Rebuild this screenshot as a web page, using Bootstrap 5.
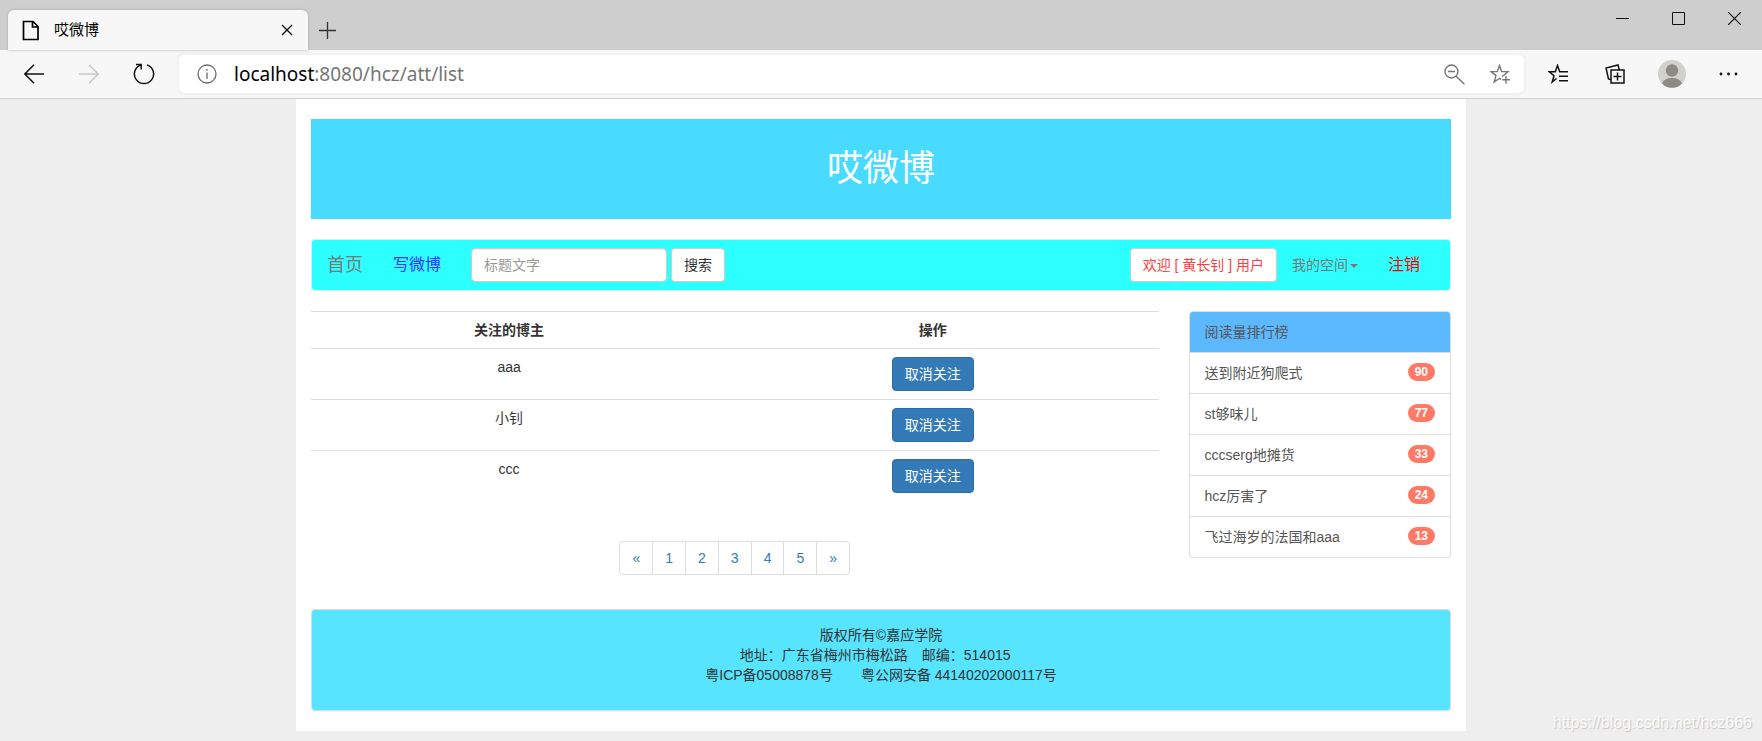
<!DOCTYPE html>
<html lang="zh-CN">
<head>
<meta charset="utf-8">
<meta name="viewport" content="width=device-width, initial-scale=1">
<title>哎微博</title>
<link href="https://cdn.jsdelivr.net/npm/bootstrap@5.3.0/dist/css/bootstrap.min.css" rel="stylesheet">
<style>
  body {
    --bs-body-font-family: "Liberation Sans", "Noto Sans CJK SC", sans-serif;
    font-family: var(--bs-body-font-family);
    font-size: 14px;
    line-height: 20px;
    color: #333;
    background: #eee;
    min-height: 100vh;
  }
  svg { display: block; fill: none; stroke: currentColor; }

  /* browser frame */
  .tab-strip { height: 50px; background: #cecece; padding-left: 8px; }
  .browser-tab { width: 300px; height: 40px; padding: 0 10px 0 14px; gap: 14px; background: #f7f7f7; border-radius: 6px 6px 0 0; box-shadow: 0 0 3px #aaa; color: #000; font-size: 15px; }
  .frame-btn { display: flex; align-items: center; justify-content: center; padding: 0; border: 0; background: none; color: #111; }
  .tab-btn { width: 22px; height: 22px; }
  .new-tab { width: 38px; height: 40px; color: #333; }
  .win-btn { width: 56px; height: 36px; }
  .toolbar { background: #f7f7f7; border-bottom: 1px solid #cfcfcf; height: 49px; padding: 0 5px 0 6px; }
  .tool-btn { width: 55px; height: 38px; }
  .tool-btn:disabled { color: #c8c8c8; }
  .side-btn { width: 57px; height: 38px; }
  .in-btn { width: 45px; height: 38px; color: #767676; }
  .address { height: 38px; margin: 0 5px 0 8px; padding-right: 2px; background: #fff; border-radius: 5px; box-shadow: 0 0 4px #e4e4e4; }
  .info-btn { width: 55px; height: 38px; color: #6c6c6c; }
  .url-box { font-family: "Noto Sans", sans-serif; font-size: 19px; line-height: 24px; color: #767676; outline: 0; }
  .url-box span { color: #000; }
  .solid-icon { stroke: none; }

  /* page */
  .page { max-width: 1170px; padding: 20px 15px; background: #fff; }
  .banner { height: 100px; background: #48daff; color: #fff; font-size: 36px; line-height: 40px; font-weight: 400; }
  .main-nav { min-height: 52px; padding: 0 15px; margin: 20px 0; background: #2dffff; border: 1px solid #e7e7e7; border-radius: 4px; }
  .main-nav a { text-decoration: none; color: #777; }
  .main-nav .brand-link { font-size: 18px; margin-right: 30px; }
  .main-nav .write-link { font-size: 16px; color: #33f; margin-right: 30px; }
  .main-nav .exit-link { font-size: 16px; color: #f00; margin: 0 15px 0 30px; }
  .ctl { height: 34px; padding: 6px 12px; font-size: 14px; line-height: 20px; border: 1px solid #ccc; border-radius: 4px; }
  .search-box { width: 196px; box-shadow: inset 0 1px 1px rgba(0,0,0,.08); }
  .search-box::placeholder { color: #999; }
  .btn-plain, .btn-plain:hover { background: #fff; color: #333; }
  .btn-user, .btn-user:hover { background: #fff; color: #ff3c3c; margin-right: 15px; }
  .space-link::after { content: ""; display: inline-block; margin-left: 2px; vertical-align: middle; border-top: 4px solid; border-left: 4px solid transparent; border-right: 4px solid transparent; }
  .page .row { --bs-gutter-x: 30px; }
  .follow-table { margin-bottom: 20px; text-align: center; color: #333; }
  .follow-table th, .follow-table td { padding: 8px; border: 0; border-top: 1px solid #ddd; color: #333; }
  .btn-follow { --bs-btn-bg: #337ab7; --bs-btn-color: #fff; --bs-btn-hover-bg: #286090; --bs-btn-hover-color: #fff; border-color: #2e6da4; vertical-align: top; }
  .pages { margin: 40px 0 34px; }
  .pages .pagination { --bs-pagination-border-radius: 4px; }
  .pages .page-link { padding: 6px 12px; font-size: 14px; line-height: 20px; color: #337ab7; border-color: #ddd; }
  .rank { --bs-list-group-border-color: #ddd; --bs-list-group-color: #555; --bs-list-group-action-color: #555; --bs-list-group-item-padding-x: 15px; --bs-list-group-item-padding-y: 10px; --bs-list-group-border-radius: 4px; }
  .rank .rank-head { background: #5cb9ff; color: #555; }
  .rank .badge { height: 18px; padding: 3px 7px; font-size: 12px; line-height: 12px; background: #ff7a66; border-radius: 10px; }
  .site-foot { padding: 15px 15px 25px; background: #56e4ff; border: 1px solid #ddd; border-radius: 4px; box-shadow: 0 1px 1px rgba(0,0,0,.05); }
  .watermark { position: absolute; right: 10px; bottom: 8px; font-size: 16px; color: #fafafa; text-shadow: 1px 1px 1px #c4c4c4; }
</style>
</head>
<body class="position-relative">

<header>
  <div class="tab-strip d-flex justify-content-between align-items-start">
    <div class="d-flex align-self-end align-items-center">
      <div class="browser-tab d-flex align-items-center">
        <svg width="18" height="21" viewBox="0 0 18 21" stroke-width="1.700"><path d="M1.500 1.500H11L16 6.500v13H1.500zM10.500 1.500V7H16"/></svg>
        <span class="flex-grow-1">哎微博</span>
        <button class="frame-btn tab-btn" type="button" aria-label="关闭标签页"><svg width="12" height="12" viewBox="0 0 12 12" stroke-width="1.400"><path d="M1 1l10 10M11 1L1 11"/></svg></button>
      </div>
      <button class="frame-btn new-tab" type="button" aria-label="新建标签页"><svg width="17" height="17" viewBox="0 0 17 17" stroke-width="1.300"><path d="M8.500 0v17M0 8.500h17"/></svg></button>
    </div>
    <div class="d-flex">
      <button class="frame-btn win-btn" type="button" aria-label="最小化"><svg width="13" height="13" viewBox="0 0 13 13"><path d="M0 6.500h13"/></svg></button>
      <button class="frame-btn win-btn" type="button" aria-label="最大化"><svg width="13" height="13" viewBox="0 0 13 13"><path d="M.5.5h12v12H.5z"/></svg></button>
      <button class="frame-btn win-btn" type="button" aria-label="关闭"><svg width="13" height="13" viewBox="0 0 13 13" stroke-width="1.200"><path d="M0 0l13 13M13 0L0 13"/></svg></button>
    </div>
  </div>
  <div class="toolbar d-flex align-items-center">
    <button class="frame-btn tool-btn" type="button" aria-label="后退"><svg width="20" height="20" viewBox="0 0 20 20" stroke-width="1.500"><path d="M20 10H1M10 .8L.9 10l9.100 9.200"/></svg></button>
    <button class="frame-btn tool-btn" type="button" aria-label="前进" disabled><svg width="20" height="20" viewBox="0 0 20 20" stroke-width="1.500"><path d="M0 10h19M10 .8l9.100 9.200-9.100 9.200"/></svg></button>
    <button class="frame-btn tool-btn" type="button" aria-label="刷新"><svg width="22" height="22" viewBox="0 0 22 22" stroke-width="1.500"><path d="M14 1.900A9.600 9.600 0 1 1 8 1.900M3 1.500H8.200v5"/></svg></button>
    <div class="address d-flex align-items-center flex-grow-1">
      <button class="frame-btn info-btn" type="button" aria-label="站点信息"><svg width="20" height="20" viewBox="0 0 20 20" stroke-width="1.300"><circle cx="10" cy="10" r="9"/><path d="M10 8.500V15M10 5v1.700"/></svg></button>
      <div class="url-box flex-grow-1" role="textbox" contenteditable="true" spellcheck="false" aria-label="地址"><span>localhost</span>:8080/hcz/att/list</div>
      <button class="frame-btn in-btn" type="button" aria-label="缩小"><svg width="21" height="21" viewBox="0 0 21 21" stroke-width="1.400"><circle cx="7.500" cy="7.500" r="6.500"/><path d="M4 7.500h7M12.200 12.200l8.200 8"/></svg></button>
      <button class="frame-btn in-btn" type="button" aria-label="添加到收藏夹"><svg width="20" height="20" viewBox="0 0 20 20" stroke-width="1.400"><path d="M12 12.500l1.800-1.300 4.200-3.600h-6.400L9.500 1.500 7.300 7.600H1l5 4-1.800 6.400 5.300-3.700 1.600 1M16 12v7.500M12.300 15.700h7.500"/></svg></button>
    </div>
    <button class="frame-btn side-btn" type="button" aria-label="收藏夹"><svg width="20" height="20" viewBox="0 0 20 20" stroke-width="1.500"><path d="M8.500 14.500L4.200 18 6 11.700 1 7.700h6.300L9.500 1.500l2.200 6.200H20M11 12.200h9M11 16.700h9"/></svg></button>
    <button class="frame-btn side-btn" type="button" aria-label="集锦"><svg width="20" height="20" viewBox="0 0 20 20" stroke-width="1.500"><path d="M6 6h13v13H6zM12.500 8.500v8M8.500 12.500h8M5.500 15.500L3.500 15 1 4l12-3 1.200 4.500"/></svg></button>
    <button class="frame-btn side-btn" type="button" aria-label="用户"><svg class="solid-icon" width="28" height="28" viewBox="0 0 28 28"><circle cx="14" cy="14" r="14" fill="#d3d1ce"/><circle cx="14" cy="10.500" r="6.200" fill="#8d8985"/><path d="M4 23.500c2.500-7.300 17.500-7.300 20 0A14 14 0 0 1 4 23.500z" fill="#8d8985"/></svg></button>
    <button class="frame-btn side-btn" type="button" aria-label="更多"><svg class="solid-icon" width="19" height="4" viewBox="0 0 19 4"><circle cx="2" cy="2" r="1.400" fill="#111"/><circle cx="9.500" cy="2" r="1.400" fill="#111"/><circle cx="17" cy="2" r="1.400" fill="#111"/></svg></button>
  </div>
</header>

<main class="container page">
  <h1 class="banner d-flex align-items-center justify-content-center mb-0">哎微博</h1>

  <nav class="main-nav d-flex align-items-center">
    <a class="brand-link" href="#">首页</a>
    <a class="write-link" href="#">写微博</a>
    <form class="d-flex gap-1 me-auto" role="search">
      <input class="form-control ctl search-box" type="text" placeholder="标题文字" aria-label="标题文字">
      <button class="btn ctl btn-plain" type="button">搜索</button>
    </form>
    <button class="btn ctl btn-user" type="button">欢迎 [ 黄长钊 ] 用户</button>
    <a class="space-link" href="#">我的空间</a>
    <a class="exit-link" href="#">注销</a>
  </nav>

  <div class="row">
    <div class="col-9">
      <table class="table follow-table">
        <thead><tr><th>关注的博主</th><th>操作</th></tr></thead>
        <tbody>
          <tr><td>aaa</td><td><button class="btn ctl btn-follow" type="button">取消关注</button></td></tr>
          <tr><td>小钊</td><td><button class="btn ctl btn-follow" type="button">取消关注</button></td></tr>
          <tr><td>ccc</td><td><button class="btn ctl btn-follow" type="button">取消关注</button></td></tr>
        </tbody>
      </table>
      <nav class="pages" aria-label="分页">
        <ul class="pagination justify-content-center mb-0">
          <li class="page-item"><a class="page-link" href="#">«</a></li>
          <li class="page-item"><a class="page-link" href="#">1</a></li>
          <li class="page-item"><a class="page-link" href="#">2</a></li>
          <li class="page-item"><a class="page-link" href="#">3</a></li>
          <li class="page-item"><a class="page-link" href="#">4</a></li>
          <li class="page-item"><a class="page-link" href="#">5</a></li>
          <li class="page-item"><a class="page-link" href="#">»</a></li>
        </ul>
      </nav>
    </div>
    <aside class="col-3">
      <div class="list-group rank">
        <a class="list-group-item list-group-item-action rank-head" href="#">阅读量排行榜</a>
        <a class="list-group-item list-group-item-action d-flex justify-content-between" href="#">送到附近狗爬式<span class="badge">90</span></a>
        <a class="list-group-item list-group-item-action d-flex justify-content-between" href="#">st够味儿<span class="badge">77</span></a>
        <a class="list-group-item list-group-item-action d-flex justify-content-between" href="#">cccserg地摊货<span class="badge">33</span></a>
        <a class="list-group-item list-group-item-action d-flex justify-content-between" href="#">hcz厉害了<span class="badge">24</span></a>
        <a class="list-group-item list-group-item-action d-flex justify-content-between" href="#">飞过海岁的法国和aaa<span class="badge">13</span></a>
      </div>
    </aside>
  </div>

  <footer class="site-foot text-center">
    版权所有©嘉应学院<br>
    地址：广东省梅州市梅松路　邮编：514015&nbsp;&nbsp;&nbsp;<br>
    粤ICP备05008878号　　粤公网安备 44140202000117号
  </footer>
</main>

<div class="watermark">https://blog.csdn.net/hcz666</div>

<script src="https://cdn.jsdelivr.net/npm/bootstrap@5.3.0/dist/js/bootstrap.bundle.min.js"></script>
</body>
</html>
